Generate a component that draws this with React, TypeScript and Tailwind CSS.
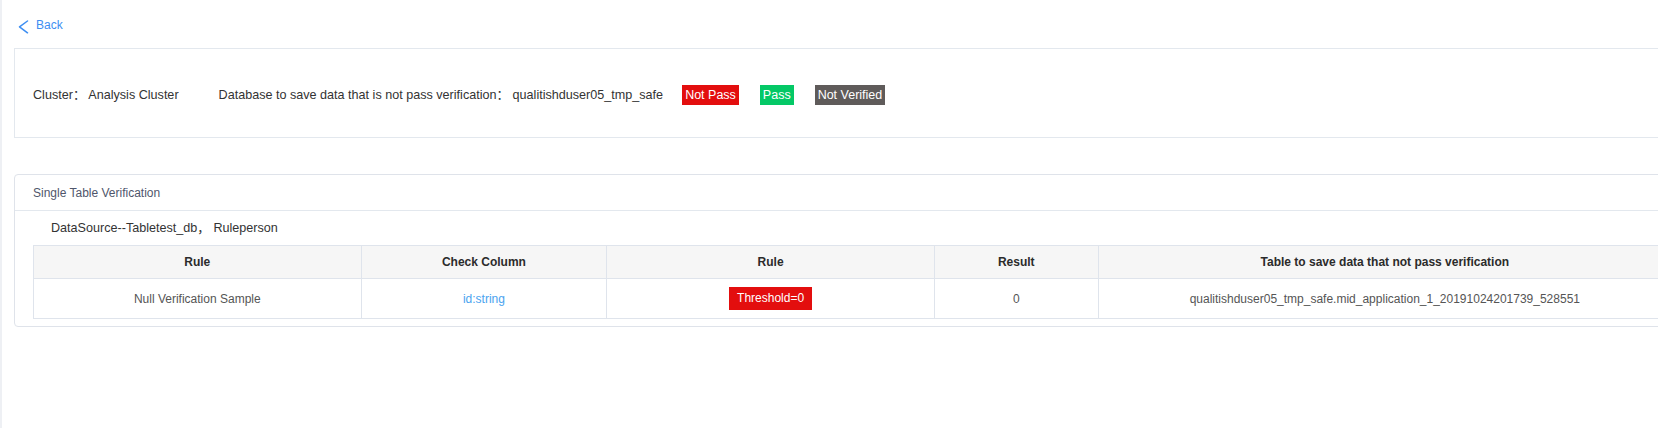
import React from 'react'

const FONT = "font-['Liberation_Sans','Noto_Sans_CJK_SC',sans-serif]"

function ChevronLeft() {
  return (
    <svg className="w-[11px] h-[14px]" viewBox="0 0 11 14" fill="none" stroke="#3d8ef2" strokeWidth="1.5" aria-hidden="true">
      <path strokeLinecap="round" strokeLinejoin="round" d="M9.5 1L1.5 6.8L9.5 12.8" />
    </svg>
  )
}

function Tag({ color, children }: { color: string; children: React.ReactNode }) {
  return (
    <span className={`inline-block h-[20px] px-[3px] leading-[20px] text-white text-[12.5px] ${color}`}>
      {children}
    </span>
  )
}

const columns = [
  { label: 'Rule', width: 'w-[20%]' },
  { label: 'Check Column', width: 'w-[15%]' },
  { label: 'Rule', width: 'w-[20%]' },
  { label: 'Result', width: 'w-[10%]' },
  { label: 'Table to save data that not pass verification', width: 'w-[35%]' },
]

export default function App() {
  return (
    <div className={`w-[1658px] h-[428px] overflow-hidden bg-white border-l-2 border-[#eef0f4] ${FONT}`}>
      <div className="w-[1706px] pl-[12px] pt-[14px]">

        {/* ── Back link ─────────────────────────────────────────── */}
        <div className="h-[22px] pl-[4px] flex items-center gap-[7px] text-[12px] text-[#3d8ef2]">
          <span className="mt-[3px]"><ChevronLeft /></span>
          <span>Back</span>
        </div>

        {/* ── Summary box ───────────────────────────────────────── */}
        <div className="mt-[12px] h-[90px] w-[1678px] border border-[#e3e8ee] flex items-center pt-[4px] px-[18px] text-[12.6px] text-[#333]">
          <span>Cluster： Analysis Cluster</span>
          <span className="ml-[40px]">Database to save data that is not pass verification： qualitishduser05_tmp_safe</span>
          <div className="ml-[19px] flex items-center gap-[21px]">
            <Tag color="bg-[#e30e0e]">Not Pass</Tag>
            <Tag color="bg-[#04c866]">Pass</Tag>
            <Tag color="bg-[#5f5b5a]">Not Verified</Tag>
          </div>
        </div>

        {/* ── Single table verification card ────────────────────── */}
        <div className="mt-[36px] w-[1678px] border border-[#dfe3ea] rounded-[4px] pb-[7px]">
          <div className="h-[36px] border-b border-[#e3e8ee] flex items-center pl-[18px] text-[12px] text-[#4f566b]">
            Single Table Verification
          </div>
          <div className="h-[34px] flex items-center pl-[36px] text-[12.6px] text-[#333]">
            DataSource--Tabletest_db， Ruleperson
          </div>
          <table className="ml-[18px] w-[1639px] table-fixed border-collapse text-[12px]">
            <thead>
              <tr>
                {columns.map((c, i) => (
                  <th key={i} className={`${c.width} h-[33px] p-0 bg-[#f6f6f6] border border-[#dfe4ec] font-bold text-[#2b2b2b] text-center`}>
                    {c.label}
                  </th>
                ))}
              </tr>
            </thead>
            <tbody>
              <tr className="text-[#555] text-center">
                <td className="h-[40px] p-0 border border-[#dfe4ec]">Null Verification Sample</td>
                <td className="p-0 border border-[#dfe4ec] text-[#4aa3ef]">id:string</td>
                <td className="p-0 border border-[#dfe4ec]">
                  <span className="inline-block h-[23px] px-[8px] leading-[23px] bg-[#e30e0e] text-white">Threshold=0</span>
                </td>
                <td className="p-0 border border-[#dfe4ec]">0</td>
                <td className="p-0 border border-[#dfe4ec]">qualitishduser05_tmp_safe.mid_application_1_20191024201739_528551</td>
              </tr>
            </tbody>
          </table>
        </div>

      </div>
    </div>
  )
}
